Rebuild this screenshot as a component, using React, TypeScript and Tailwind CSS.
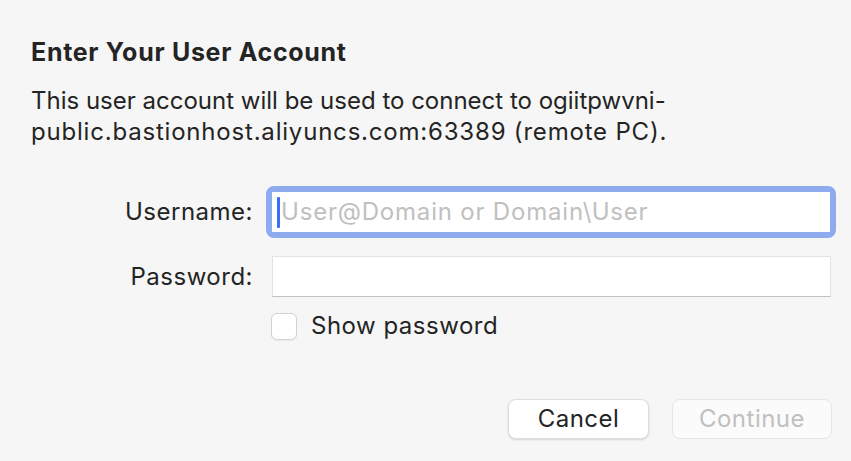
import React, { useState } from "react";

const App: React.FC = () => {
  const [show, setShow] = useState(false);

  return (
    <div
      className="w-[851px] h-[461px] bg-[#f6f6f6] text-[#242424] overflow-hidden"
      style={{ fontFamily: "Inter, 'Noto Sans', sans-serif" }}
    >
      <div className="pl-[31px] pt-[37px]">
        <h1 className="text-[25px] font-bold leading-[30px] tracking-[0.7px]">
          Enter Your User Account
        </h1>
        <p className="mt-[18px] text-[24px] leading-[31px] w-[760px]">
          This user account will be used to connect to ogiitpwvni-
          <br />
          <span className="tracking-[0.8px]">
            public.bastionhost.aliyuncs.com:63389 (remote PC).
          </span>
        </p>
      </div>

      <div className="mt-[39px] flex flex-col text-[24px] tracking-[0.5px]">
        <div className="flex items-center">
          <label className="w-[253px] text-right">Username:</label>
          <div className="ml-[13px] w-[570px] rounded-[8px] border-[6px] border-[#8eabef]">
            <div className="h-[40px] bg-white flex items-center pl-[5px]">
              <span className="w-[3px] h-[31px] bg-[#3b6ef5] rounded-[1px]" />
              <input
                className="flex-1 bg-transparent outline-none pl-[1px] tracking-[0.8px] placeholder:text-[#c0c0c0]"
                placeholder="User@Domain or Domain\User"
              />
            </div>
          </div>
        </div>

        <div className="mt-[18px] flex items-center">
          <label className="w-[253px] text-right">Password:</label>
          <div className="ml-[19px] w-[559px] h-[41px] bg-white border border-[#e3e3e3] border-b-[#c2c2c2]">
            <input
              type={show ? "text" : "password"}
              className="w-full h-full bg-transparent outline-none px-2"
            />
          </div>
        </div>

        <label className="mt-[11px] ml-[271px] flex items-center gap-[14px] cursor-default">
          <span
            onClick={() => setShow(!show)}
            className="w-[26px] h-[27px] rounded-[6px] bg-white border border-[#d2d2d2] shadow-[0_1px_1px_rgba(0,0,0,0.05)]"
          />
          <span>Show password</span>
        </label>
      </div>

      <div className="mt-[55px] flex justify-end gap-[23px] pr-[19px] text-[24px] tracking-[0.5px]">
        <button className="w-[141px] h-[40px] rounded-[8px] bg-white text-[#242424] border border-[#dedede] shadow-[0_1px_2px_rgba(0,0,0,0.15)]">
          Cancel
        </button>
        <button
          disabled
          className="w-[160px] h-[40px] rounded-[8px] bg-[#fbfbfb] text-[#c0c0c0] border border-[#e6e6e6]"
        >
          Continue
        </button>
      </div>
    </div>
  );
};

export default App;
